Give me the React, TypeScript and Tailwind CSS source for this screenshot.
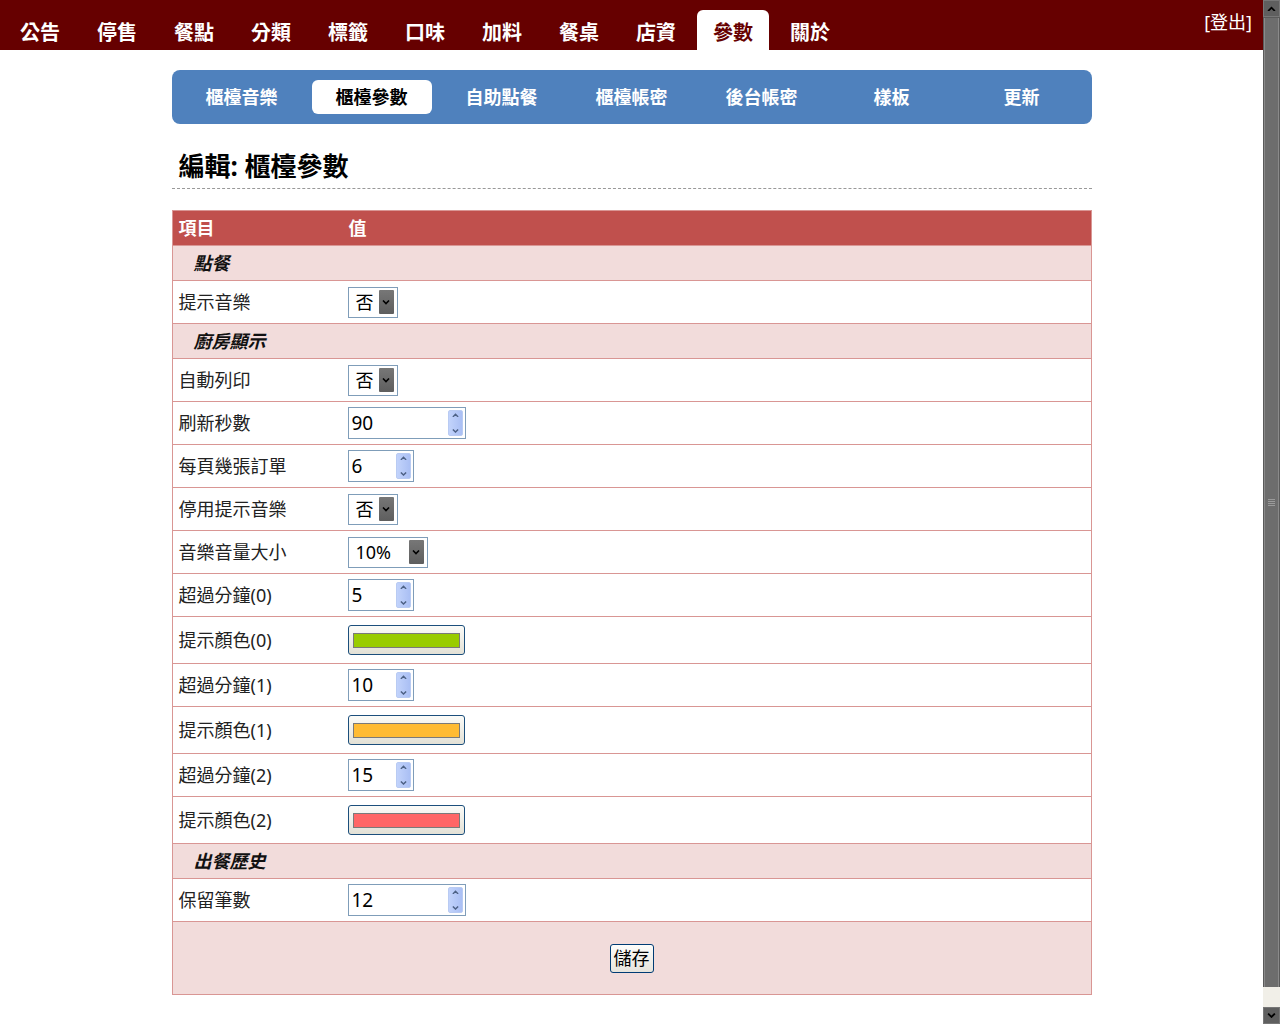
import { ReactNode } from "react";

const topTabs = ["公告", "停售", "餐點", "分類", "標籤", "口味", "加料", "餐桌", "店資", "參數", "關於"];
const subTabs = ["櫃檯音樂", "櫃檯參數", "自助點餐", "櫃檯帳密", "後台帳密", "樣板", "更新"];

type Row =
  | { kind: "section"; label: string }
  | { kind: "select"; label: string; value: string; width: number }
  | { kind: "number"; label: string; value: string; width: number }
  | { kind: "color"; label: string; color: string };

const rows: Row[] = [
  { kind: "section", label: "點餐" },
  { kind: "select", label: "提示音樂", value: "否", width: 50 },
  { kind: "section", label: "廚房顯示" },
  { kind: "select", label: "自動列印", value: "否", width: 50 },
  { kind: "number", label: "刷新秒數", value: "90", width: 118 },
  { kind: "number", label: "每頁幾張訂單", value: "6", width: 66 },
  { kind: "select", label: "停用提示音樂", value: "否", width: 50 },
  { kind: "select", label: "音樂音量大小", value: "10%", width: 80 },
  { kind: "number", label: "超過分鐘(0)", value: "5", width: 66 },
  { kind: "color", label: "提示顏色(0)", color: "#99cc00" },
  { kind: "number", label: "超過分鐘(1)", value: "10", width: 66 },
  { kind: "color", label: "提示顏色(1)", color: "#ffbb33" },
  { kind: "number", label: "超過分鐘(2)", value: "15", width: 66 },
  { kind: "color", label: "提示顏色(2)", color: "#ff6666" },
  { kind: "section", label: "出餐歷史" },
  { kind: "number", label: "保留筆數", value: "12", width: 118 },
];

function Chevron({ up = false, className = "" }: { up?: boolean; className?: string }) {
  return (
    <svg viewBox="0 0 8 5" className={className} fill="none" stroke="currentColor" strokeWidth="1.6">
      {up ? <path d="M1 4.5L4 1.5L7 4.5" /> : <path d="M1 0.5L4 3.5L7 0.5" />}
    </svg>
  );
}

function SelectBox({ value, width }: { value: string; width: number }) {
  return (
    <div
      className="flex h-[31px] items-center justify-between border border-[#7f9db9] bg-white pl-[7px] pr-[3px]"
      style={{ width }}
    >
      <span className="text-[18px] leading-none text-black">{value}</span>
      <span className="flex h-[24px] w-[15px] items-center justify-center rounded-[1px] bg-gradient-to-b from-[#777] to-[#5e5e5e] text-black">
        <Chevron className="w-[8px]" />
      </span>
    </div>
  );
}

function NumberBox({ value, width }: { value: string; width: number }) {
  return (
    <div
      className="flex h-[32px] items-center justify-between border border-[#7f9db9] bg-white pl-[3px] pr-[2px]"
      style={{ width }}
    >
      <span className="text-[19px] leading-none text-black">{value}</span>
      <span className="flex h-[26px] w-[15px] flex-col items-center justify-between rounded-[2px] border border-[#b9cbf3] bg-gradient-to-r from-[#c2d3fb] to-[#aabff4] py-[2px] text-[#4d6185]">
        <Chevron up className="w-[7px]" />
        <Chevron className="w-[7px]" />
      </span>
    </div>
  );
}

function ColorBox({ color }: { color: string }) {
  return (
    <div className="flex h-[30px] w-[117px] items-center justify-center rounded-[3px] border border-[#1c4f7c] bg-gradient-to-b from-[#fbfbf8] to-[#e3e1d6]">
      <span className="h-[15px] w-[107px] border border-[#7a7a7a]" style={{ backgroundColor: color }} />
    </div>
  );
}

function DataRow({ label, height, children }: { label: string; height: string; children: ReactNode }) {
  return (
    <div className={`flex items-center border-b border-[#d99694] bg-white ${height}`}>
      <div className="w-[169px] pl-[6px] text-[18px] leading-none text-[#222]">{label}</div>
      <div className="flex-1 pl-[6px]">{children}</div>
    </div>
  );
}

function Scrollbar() {
  return (
    <div className="flex h-[1024px] w-[17px] flex-col bg-[#5a5a5a]">
      <div className="flex h-[17px] items-center justify-center border border-[#777] bg-[#5f5f5f] text-black">
        <Chevron up className="w-[9px]" />
      </div>
      <div className="mx-[1px] mt-[1px] flex flex-1 items-center justify-center border-x border-[#8a8a8a] bg-[#6d6d6d]">
        <div className="flex flex-col gap-[1px]">
          <span className="h-[1px] w-[7px] bg-[#9a9a9a]" />
          <span className="h-[1px] w-[7px] bg-[#9a9a9a]" />
          <span className="h-[1px] w-[7px] bg-[#9a9a9a]" />
          <span className="h-[1px] w-[7px] bg-[#9a9a9a]" />
        </div>
      </div>
      <div className="h-[20px] bg-[#f1efe8]" />
      <div className="flex h-[17px] items-center justify-center border border-[#777] bg-[#5f5f5f] text-black">
        <Chevron className="w-[9px]" />
      </div>
    </div>
  );
}

export default function App() {
  return (
    <div className="flex h-[1024px] overflow-hidden bg-white font-['Noto_Sans','Noto_Sans_CJK_TC',sans-serif]">
      <div className="flex-1">
        <header className="flex h-[50px] items-end bg-[#660000] pl-[4px]">
          {topTabs.map((t) => (
            <div
              key={t}
              className={`mr-[5px] flex h-[40px] items-center px-[16px] pt-[5px] text-[20px] font-bold leading-none ${
                t === "參數" ? "rounded-t-[6px] bg-white text-[#660000]" : "text-white"
              }`}
            >
              {t}
            </div>
          ))}
          <div className="mb-auto ml-auto mr-[11px] mt-[11px] text-[18px] leading-[22px] text-white">[登出]</div>
        </header>

        <main className="mx-auto w-[920px]">
          <nav className="mt-[20px] flex h-[54px] items-center rounded-[8px] bg-[#4f81bd] px-[5px]">
            {subTabs.map((t) => (
              <div key={t} className="flex w-[130px] justify-center">
                <div
                  className={`flex h-[34px] w-[120px] items-center justify-center rounded-[6px] text-[18px] font-bold leading-none ${
                    t === "櫃檯參數" ? "bg-white text-black" : "text-white"
                  }`}
                >
                  {t}
                </div>
              </div>
            ))}
          </nav>

          <h1 className="mt-[22px] border-b border-dashed border-[#999] pb-[2px] pl-[7px] text-[26px] font-bold leading-[40px] text-black">
            編輯: 櫃檯參數
          </h1>

          <div className="mt-[21px] border-x border-t border-[#d99694]">
            <div className="flex h-[35px] items-center border-b border-[#d99694] bg-[#c0504d] text-[18px] font-bold leading-none text-white">
              <div className="w-[169px] pl-[6px]">項目</div>
              <div className="pl-[7px]">值</div>
            </div>
            {rows.map((r) => {
              if (r.kind === "section")
                return (
                  <div
                    key={r.label}
                    className="flex h-[35px] items-center border-b border-[#d99694] bg-[#f2dcdb] pl-[21px] text-[18px] font-bold italic leading-none text-[#111]"
                  >
                    {r.label}
                  </div>
                );
              if (r.kind === "select")
                return (
                  <DataRow key={r.label} label={r.label} height="h-[43px]">
                    <SelectBox value={r.value} width={r.width} />
                  </DataRow>
                );
              if (r.kind === "number")
                return (
                  <DataRow key={r.label} label={r.label} height="h-[43px]">
                    <NumberBox value={r.value} width={r.width} />
                  </DataRow>
                );
              return (
                <DataRow key={r.label} label={r.label} height="h-[47px]">
                  <ColorBox color={r.color} />
                </DataRow>
              );
            })}
            <div className="flex h-[73px] items-center justify-center border-b border-[#d99694] bg-[#f2dcdb]">
              <button
                type="button"
                className="h-[29px] w-[44px] rounded-[3px] border border-[#003c74] bg-gradient-to-b from-[#fdfdfb] to-[#e6e4dc] text-[18px] leading-none text-black"
              >
                儲存
              </button>
            </div>
          </div>
        </main>
      </div>
      <Scrollbar />
    </div>
  );
}
